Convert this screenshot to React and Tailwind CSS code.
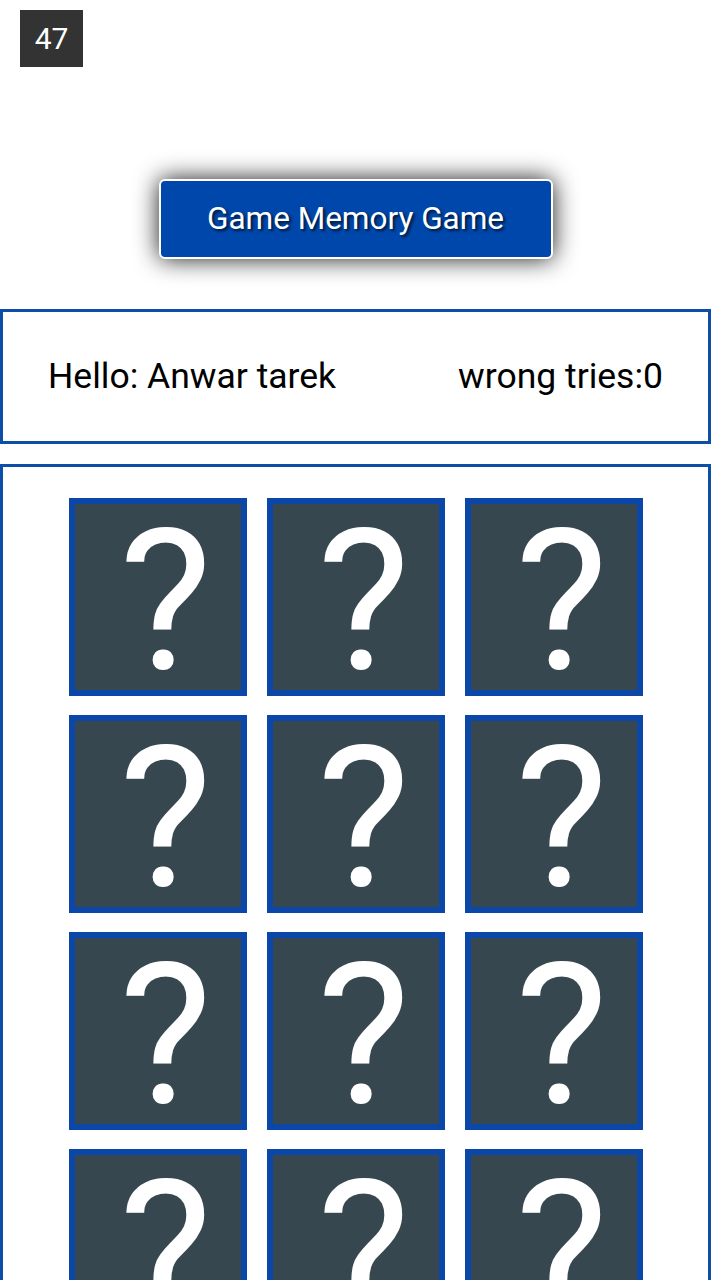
import React from 'react';

const cards = Array.from({ length: 12 }, (_, i) => i);

// face-down card, nothing flipped yet
const Card = () => (
  <div className="w-[178px] h-[198px] bg-[#37474f] border-[6px] border-[#0a47a9] flex items-center justify-center">
    <span className="text-white text-[196px] leading-[150px] select-none pl-[16px] pt-[10px]">?</span>
  </div>
);

const App = () => {
  return (
    <div className="h-[1280px] bg-white font-['Roboto',sans-serif] text-black overflow-hidden">
      <div className="pt-[10px] pl-[20px]">
        <div className="w-[63px] h-[57px] bg-[#333333] text-white text-[30px] flex items-center justify-center">
          47
        </div>
      </div>

      <div className="flex justify-center mt-[112px]">
        <button className="w-[394px] h-[80px] bg-[#0047ab] text-white text-[31.5px] rounded-[6px] border-2 border-white shadow-[0_0_24px_rgba(0,0,0,0.9)] [text-shadow:2px_2px_3px_rgba(0,0,0,0.7)]">
          Game Memory Game
        </button>
      </div>

      <div className="mt-[50px] h-[135px] border-[3px] border-[#0d4ea6] flex items-center justify-between px-[45px] text-[35.5px]">
        <span>Hello: Anwar tarek</span>
        <span>wrong tries:0</span>
      </div>

      <div className="mt-[20px] border-[3px] border-[#0d4ea6] pt-[31px] pb-[30px]">
        <div className="grid grid-cols-[repeat(3,178px)] gap-x-[20px] gap-y-[19px] justify-center">
          {cards.map(i => (
            <Card key={i} />
          ))}
        </div>
      </div>
    </div>
  );
};

export default App;
